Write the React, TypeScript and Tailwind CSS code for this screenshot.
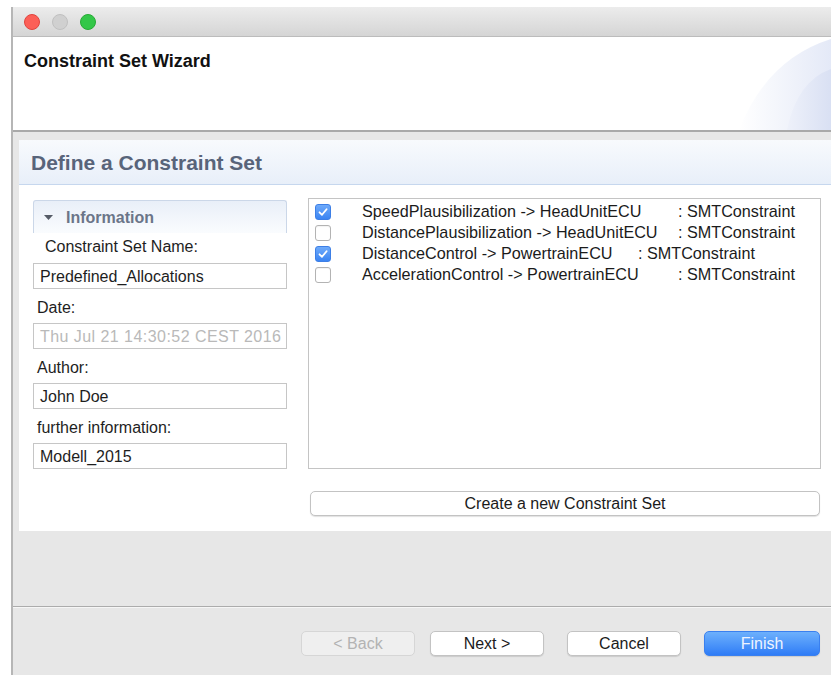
import React from "react";

type Row = { name: string; checked: boolean; nameWidth: string };

const rows: Row[] = [
  { name: "SpeedPlausibilization -> HeadUnitECU", checked: true, nameWidth: "w-[316px]" },
  { name: "DistancePlausibilization -> HeadUnitECU", checked: false, nameWidth: "w-[316px]" },
  { name: "DistanceControl -> PowertrainECU", checked: true, nameWidth: "w-[276px]" },
  { name: "AccelerationControl -> PowertrainECU", checked: false, nameWidth: "w-[316px]" },
];

function CheckBox({ checked }: { checked: boolean }) {
  if (checked) {
    return (
      <div className="w-[16px] h-[16px] shrink-0 rounded-[3px] border border-[#3d7fe6] bg-gradient-to-b from-[#6eaafa] to-[#3a84f2] flex items-center justify-center">
        <svg width="12" height="12" viewBox="0 0 12 12">
          <polyline
            points="2.5,6.3 5,8.8 9.6,3.2"
            fill="none"
            stroke="white"
            strokeWidth="1.8"
            strokeLinecap="round"
            strokeLinejoin="round"
          />
        </svg>
      </div>
    );
  }
  return (
    <div className="w-[16px] h-[16px] shrink-0 rounded-[3px] border border-[#b3b3b3] bg-white shadow-[inset_0_1px_1px_rgba(0,0,0,0.05)]" />
  );
}

function Field({ value, disabled }: { value: string; disabled?: boolean }) {
  return (
    <div
      className={
        "h-[26px] border border-[#c6c6c6] bg-white flex items-center pl-[6px] pt-[1px] text-[16px] whitespace-nowrap overflow-hidden " +
        (disabled ? "text-[#b9b9b9] tracking-[0.45px]" : "text-[#1e1e1e]")
      }
    >
      {value}
    </div>
  );
}

function Label({ text, first }: { text: string; first?: boolean }) {
  return (
    <div
      className={
        "text-[16px] leading-[20px] text-[#1e1e1e] " +
        (first ? "h-[30px] pt-[4px] pl-[12px]" : "h-[34px] pt-[9px] pl-[4px]")
      }
    >
      {text}
    </div>
  );
}

function WizardButton({
  label,
  variant,
  width,
}: {
  label: string;
  variant: "disabled" | "normal" | "primary";
  width: string;
}) {
  const base =
    "h-[25px] rounded-[5px] flex items-center justify-center text-[16px] leading-none " + width + " ";
  if (variant === "disabled") {
    return (
      <div className={base + "bg-[#efefef] border border-[#d6d6d6] text-[#b3b3b3]"}>{label}</div>
    );
  }
  if (variant === "primary") {
    return (
      <div
        className={
          base +
          "bg-gradient-to-b from-[#6db0fc] to-[#2f7cf6] border border-[#3a80ef] text-[#eef4ff] shadow-[0_1px_1px_rgba(0,0,0,0.12)]"
        }
      >
        {label}
      </div>
    );
  }
  return (
    <div
      className={
        base + "bg-white border border-[#c3c3c3] text-[#1b1b1b] shadow-[0_1px_1px_rgba(0,0,0,0.12)]"
      }
    >
      {label}
    </div>
  );
}

export default function App() {
  return (
    <div className="w-[831px] h-[675px] bg-white flex flex-col overflow-hidden font-['Liberation_Sans',Arial,sans-serif]">
      <div className="h-[7px] shrink-0" />
      <div className="flex-1 ml-[11px] border-l-2 border-[#b6b6b6] flex flex-col bg-[#e7e7e7]">
        {/* title bar */}
        <div className="h-[30px] shrink-0 bg-gradient-to-b from-[#ececec] to-[#d5d5d5] border-b border-[#bcbcbc] flex items-center pl-[11px] gap-[12px]">
          <div className="w-[16px] h-[16px] rounded-full bg-[#fc5f57] border border-[#e0443e]" />
          <div className="w-[16px] h-[16px] rounded-full bg-[#d0d0d0] border border-[#c0c0c0]" />
          <div className="w-[16px] h-[16px] rounded-full bg-[#33c748] border border-[#27aa35]" />
        </div>

        {/* wizard banner */}
        <div className="relative h-[95px] shrink-0 bg-white border-b-2 border-[#a9a9a9] pl-[11px] pt-[14px]">
          <div className="text-[18px] leading-[20px] font-bold text-[#111]">Constraint Set Wizard</div>
          <svg
            className="absolute right-0 top-0"
            width="100"
            height="93"
            viewBox="0 0 100 93"
          >
            <defs>
              <linearGradient id="bannerOuter" x1="0" y1="0" x2="1" y2="0">
                <stop offset="0" stopColor="#ffffff" />
                <stop offset="1" stopColor="#e4e9f7" />
              </linearGradient>
              <linearGradient id="bannerInner" x1="0" y1="0" x2="1" y2="0">
                <stop offset="0" stopColor="#eef1fa" />
                <stop offset="1" stopColor="#d9e0f3" />
              </linearGradient>
            </defs>
            <path d="M8 93 Q36 22 100 2 L100 93 Z" fill="url(#bannerOuter)" />
            <path d="M56 93 Q66 44 100 32 L100 93 Z" fill="url(#bannerInner)" />
          </svg>
        </div>

        {/* page body */}
        <div className="flex-1 flex flex-col pl-[6px] pt-[8px]">
          <div className="bg-white flex flex-col">
            <div className="h-[45px] bg-gradient-to-b from-[#f8fafd] to-[#e8eff9] border-b border-[#c6d7ee] flex items-center pl-[12px] pt-[2px]">
              <span className="text-[21px] font-bold text-[#58647a]">Define a Constraint Set</span>
            </div>

            <div className="grid grid-cols-[254px_1fr] gap-x-[21px] pl-[14px] pr-[10px] pt-[13px] pb-[15px]">
              {/* information fields */}
              <div className="flex flex-col pt-[2px]">
                <div className="h-[33px] rounded-t-[3px] border border-b-0 border-[#cbd7e8] bg-gradient-to-b from-[#e9eff8] to-[#fafcfe] flex items-center pl-[10px] pt-[1px]">
                  <svg width="9" height="6" viewBox="0 0 9 6" className="mr-[13px]">
                    <polygon points="0,0 9,0 4.5,5" fill="#555b66" />
                  </svg>
                  <span className="text-[16px] font-bold text-[#6b7588]">Information</span>
                </div>
                <Label text="Constraint Set Name:" first />
                <Field value="Predefined_Allocations" />
                <Label text="Date:" />
                <Field value="Thu Jul 21 14:30:52 CEST 2016" disabled />
                <Label text="Author:" />
                <Field value="John Doe" />
                <Label text="further information:" />
                <Field value="Modell_2015" />
              </div>

              {/* constraint list */}
              <div className="border border-[#c4c4c4] bg-white pt-[2px]">
                {rows.map((r) => (
                  <div key={r.name} className="h-[21px] flex items-center pl-[6px]">
                    <CheckBox checked={r.checked} />
                    <div className="ml-[31px] flex text-[16.2px] text-[#1b1b1b] whitespace-nowrap">
                      <span className={"shrink-0 " + r.nameWidth}>{r.name}</span>
                      <span>: SMTConstraint</span>
                    </div>
                  </div>
                ))}
              </div>

              <div />
              <div className="mt-[22px] pl-[2px] pr-[1px]">
                <div className="h-[25px] rounded-[5px] border border-[#c3c3c3] bg-white shadow-[0_1px_1px_rgba(0,0,0,0.12)] flex items-center justify-center text-[16px] text-[#1b1b1b]">
                  Create a new Constraint Set
                </div>
              </div>
            </div>
          </div>
          <div className="flex-1" />
        </div>

        {/* button bar */}
        <div className="h-[69px] shrink-0 border-t border-[#acacac] shadow-[inset_0_1px_0_#f6f6f6] flex justify-end items-start pt-[24px] pr-[11px]">
          <WizardButton label="< Back" variant="disabled" width="w-[114px]" />
          <div className="w-[15px]" />
          <WizardButton label="Next >" variant="normal" width="w-[114px]" />
          <div className="w-[23px]" />
          <WizardButton label="Cancel" variant="normal" width="w-[114px]" />
          <div className="w-[23px]" />
          <WizardButton label="Finish" variant="primary" width="w-[116px]" />
        </div>
      </div>
    </div>
  );
}
